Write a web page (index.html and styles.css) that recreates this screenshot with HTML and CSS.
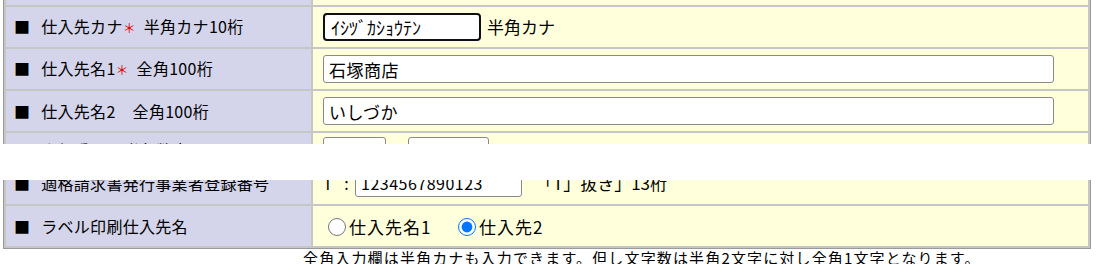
FILE: index.html
```html
<!DOCTYPE html>
<html lang="ja">
<head>
<meta charset="utf-8">
<title>仕入先登録</title>
<link rel="stylesheet" href="styles.css">
</head>
<body>
<div class="page">
  <table class="form">
    <tr class="r0"><td class="label"></td><td class="value"></td></tr>
    <tr class="row">
      <td class="label">■ 仕入先カナ<span class="req">＊</span>半角カナ10桁</td>
      <td class="value"><input class="inp kana" type="text" value="ｲｼﾂﾞｶｼｮｳﾃﾝ"><span class="note">半角カナ</span></td>
    </tr>
    <tr class="row">
      <td class="label">■ 仕入先名1<span class="req">＊</span>全角100桁</td>
      <td class="value"><input class="inp wide" type="text" value="石塚商店"></td>
    </tr>
    <tr class="row">
      <td class="label">■ 仕入先名2<span class="sp"></span>全角100桁</td>
      <td class="value"><input class="inp wide" type="text" value="いしづか"></td>
    </tr>
    <tr class="r4">
      <td class="label"><div class="box">■ 郵便番号<span class="sp"></span>半角数字</div></td>
      <td class="value"><div class="box zip"><input class="inp z1" type="text"><span class="dash">-</span><input class="inp z2" type="text"></div></td>
    </tr>
    <tr class="r5">
      <td class="label"><div class="box">■ 適格請求書発行事業者登録番号</div></td>
      <td class="value"><div class="box"><span class="tpre">T :</span><input class="inp reg" type="text" value="1234567890123"><span class="note2">「T」抜き」13桁</span></div></td>
    </tr>
    <tr class="row">
      <td class="label">■ ラベル印刷仕入先名</td>
      <td class="value">
        <label class="opt first"><input type="radio" name="lbl" class="rad">仕入先名1</label>
        <label class="opt"><input type="radio" name="lbl" class="rad" checked>仕入先2</label>
      </td>
    </tr>
  </table>
  <p class="foot">全角入力欄は半角カナも入力できます。但し文字数は半角2文字に対し全角1文字となります。</p>
  <div class="band"></div>
</div>
</body>
</html>
```

FILE: styles.css
```css
html, body {
  margin: 0;
  padding: 0;
  background: #ffffff;
}
body {
  font-family: "Noto Sans CJK JP", "Noto Sans", sans-serif;
  font-size: 16px;
  color: #000;
  overflow: hidden;
}
.page {
  position: relative;
  width: 1100px;
  height: 267px;
  padding-left: 3px;
  box-sizing: border-box;
}
.form {
  margin-top: -3px;
  width: 1088px;
  border: 1px solid #9a9a9a;
  border-spacing: 2px;
  background: #c6c6c6;
}
.form td {
  padding: 0;
  vertical-align: middle;
  white-space: nowrap;
}
.label {
  width: 297px;
  padding-left: 8px !important;
  background: #d4d4ea;
  word-spacing: 7px;
  letter-spacing: 0.3px;
  line-height: 20px;
}
.value {
  background: #ffffdc;
  padding-left: 10px !important;
  line-height: 20px;
}
.sp {
  display: inline-block;
  width: 17px;
}
.r0 td { height: 5px; }
.row td { height: 40px; }
.r4 td, .r5 td {
  vertical-align: top;
  overflow: hidden;
}
.r4 td { height: 34px; }
.r5 td { height: 35px; }
.box {
  display: flex;
  align-items: center;
  height: 28px;
  overflow: hidden;
}
.r4 .box { margin-top: 4px; }
.r4 .label .box { margin-top: 3px; }
.req {
  color: #e00000;
  font-size: 13px;
  margin-right: 8px;
  letter-spacing: 0;
}
.inp {
  font-family: "Noto Sans CJK JP", sans-serif;
  font-size: 17px;
  letter-spacing: 0.5px;
  height: 28px;
  box-sizing: border-box;
  border: 1px solid #8a8a8a;
  border-radius: 3px;
  background: #fff;
  padding: 0 5px;
  vertical-align: middle;
  margin: 0;
  outline: none;
}
.kana {
  width: 158px;
  border: 2px solid #101010;
  border-radius: 4px;
  padding-left: 6px;
  font-size: 18px;
  letter-spacing: 0;
}
.wide { width: 731px; }
.note { margin-left: 6px; vertical-align: middle; font-size: 17px; }
.z1 { width: 63px; flex: none; }
.z2 { width: 81px; flex: none; }
.dash { width: 22px; text-align: center; }
.tpre { display: inline-block; width: 32px; word-spacing: 8px; }
.reg { width: 167px; font-size: 16px; flex: none; }
.note2 { margin-left: 14px; font-size: 17px; }
.opt {
  display: inline-flex;
  align-items: center;
  vertical-align: middle;
  font-size: 17px;
  letter-spacing: 1px;
}
.opt.first { margin-right: 18px; }
.rad {
  width: 18px;
  height: 18px;
  margin: 0 3px 0 5px;
}
.foot {
  margin: 0;
  padding-left: 300px;
  font-size: 15px;
  letter-spacing: 1.15px;
  line-height: 18px;
}
.band {
  position: absolute;
  left: 0;
  top: 147px;
  width: 100%;
  height: 36px;
  background: #ffffff;
}
```
